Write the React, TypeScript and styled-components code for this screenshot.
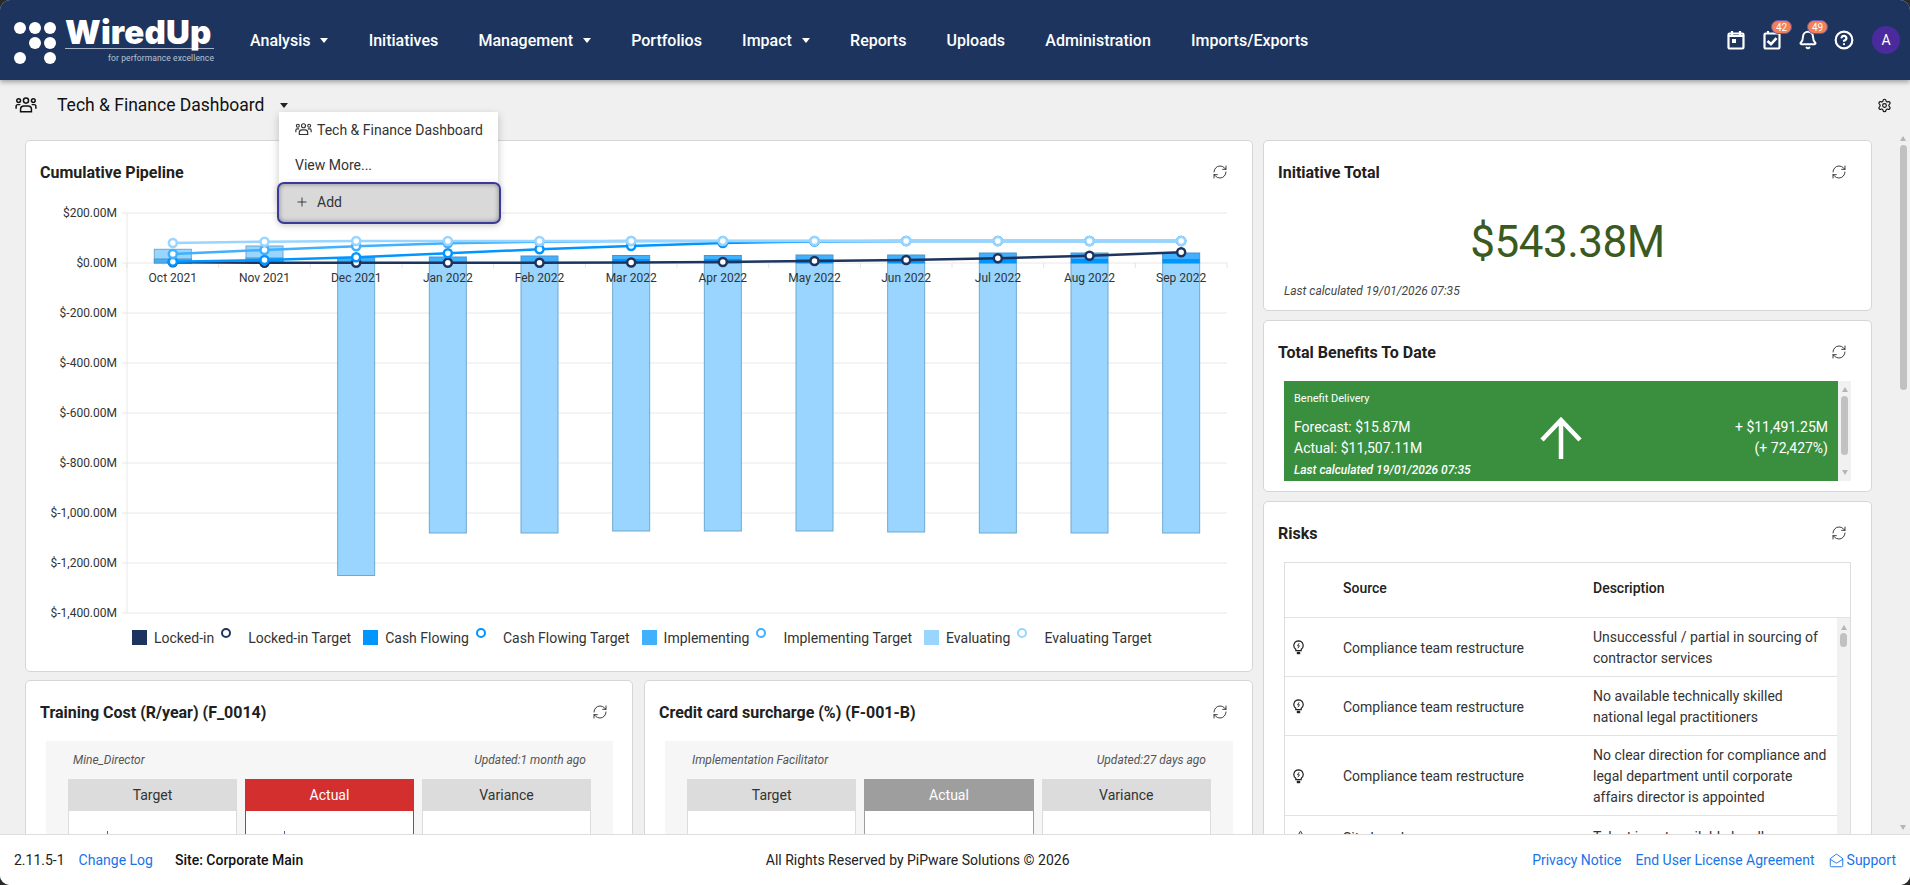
import React from "react";
import styled, { createGlobalStyle } from "styled-components";
import { RefreshCw, Settings, Bell, CircleHelp, Plus, Star, MailOpen } from "lucide-react";

const Global = createGlobalStyle`
  html, body { margin: 0; padding: 0; height: 100%; background: #2a2a2a; overflow: hidden; }
  #root { height: 100%; }
  * { box-sizing: border-box; }
`;

const Page = styled.div`
  height: 100vh;
  display: flex;
  flex-direction: column;
  background: #f0f0f0;
  border-radius: 10px;
  overflow: hidden;
  font-family: Roboto, "Liberation Sans", sans-serif;
  font-size: 14px;
  color: #333;
`;

const Header = styled.header`
  flex: 0 0 80px;
  display: flex;
  align-items: center;
  background: #1d355e;
  color: #fff;
  padding: 0 10px 0 14px;
  box-shadow: 0 2px 5px rgba(0, 0, 0, 0.35);
  position: relative;
  z-index: 3;
`;

const LogoWrap = styled.div`
  display: flex;
  align-items: flex-start;
  width: 236px;
  flex: none;
  gap: 7px;
`;

const LogoBlock = styled.div`
  width: 149px;
  padding-top: 2px;
`;

const LogoWord = styled.div`
  font-family: Inter, sans-serif;
  font-weight: 900;
  font-size: 33px;
  line-height: 31px;
  height: 32px;
  letter-spacing: 0.2px;
  border-bottom: 1px solid #aab4c8;
  white-space: nowrap;
`;

const LogoTag = styled.div`
  font-size: 8.5px;
  line-height: 11px;
  margin-top: 4px;
  letter-spacing: 0.1px;
  text-align: right;
  color: #b9c2d2;
  white-space: nowrap;
`;

const Nav = styled.nav`
  display: flex;
  align-items: center;
  gap: 40.2px;
`;

const NavItem = styled.div`
  display: flex;
  align-items: center;
  gap: 10px;
  font-size: 16px;
  font-weight: 500;
  white-space: nowrap;
`;

const Caret = styled.span<{ $color?: string; $size?: number }>`
  width: 0;
  height: 0;
  border-left: ${(p) => p.$size ?? 4}px solid transparent;
  border-right: ${(p) => p.$size ?? 4}px solid transparent;
  border-top: ${(p) => (p.$size ?? 4) + 1}px solid ${(p) => p.$color ?? "#fff"};
`;

const HeaderTools = styled.div`
  margin-left: auto;
  display: flex;
  align-items: center;
`;

const ToolIcon = styled.div`
  position: relative;
  width: 36px;
  height: 24px;
  display: flex;
  align-items: center;
  justify-content: center;
`;

const Badge = styled.span`
  position: absolute;
  top: -8px;
  left: 17px;
  height: 14px;
  min-width: 21px;
  border-radius: 7px;
  background: #f47f58;
  border: 0.5px solid #5d5aa8;
  font-size: 10px;
  line-height: 14px;
  text-align: center;
  color: #fff;
`;

const Avatar = styled.div`
  width: 28px;
  height: 28px;
  border-radius: 50%;
  background: #4a2a9c;
  margin-left: 10px;
  display: flex;
  align-items: center;
  justify-content: center;
  font-size: 14px;
`;

const SubBar = styled.div`
  flex: 0 0 50px;
  position: relative;
  z-index: 2;
  display: flex;
  align-items: center;
  padding: 0 18px 0 15px;
  color: #111;
`;

const SubTitle = styled.div`
  font-size: 17.5px;
  margin-left: 20px;
  margin-right: 16px;
  white-space: nowrap;
`;

const GearWrap = styled.div`
  margin-left: auto;
  display: flex;
  color: #111;
`;

const Menu = styled.div`
  position: absolute;
  top: 32px;
  left: 279px;
  width: 219px;
  height: 88px;
  padding-top: 0;
  background: #fff;
  box-shadow: 0 3px 8px rgba(0, 0, 0, 0.22);
`;

const MenuItem = styled.div`
  height: 35px;
  display: flex;
  align-items: center;
  gap: 5px;
  padding-left: 16px;
  color: #333;
  white-space: nowrap;
`;

const MenuAdd = styled.div`
  position: absolute;
  top: 70px;
  left: -2px;
  width: 224px;
  height: 42px;
  display: flex;
  align-items: center;
  gap: 8px;
  padding: 0 0 2px 16px;
  background: #d9d9d9;
  border: 2px solid #3a3a9a;
  border-radius: 7px;
  box-shadow: inset 0 0 5px rgba(0, 0, 0, 0.4), 0 2px 6px rgba(0, 0, 0, 0.2);
  color: #333;
`;

const Main = styled.main`
  flex: 1;
  min-height: 0;
  display: flex;
  align-items: flex-start;
  overflow: hidden;
  padding-left: 25px;
`;

const LeftCol = styled.div`
  flex: 0 0 1228px;
  margin-top: 10px;
  display: flex;
  flex-direction: column;
  gap: 8px;
`;

const RightCol = styled.div`
  flex: 0 0 609px;
  margin: 10px 0 0 10px;
  display: flex;
  flex-direction: column;
  gap: 9px;
`;

const Card = styled.section<{ $height?: number }>`
  background: #fff;
  border: 1px solid #d6d6d6;
  border-radius: 5px;
  ${(p) => (p.$height ? `height: ${p.$height}px;` : "")}
  display: flex;
  flex-direction: column;
  flex: none;
`;

const CardHead = styled.div`
  flex: 0 0 60px;
  display: flex;
  align-items: center;
  justify-content: space-between;
  padding: 2px 24px 0 14px;
`;

const CardTitle = styled.h2`
  margin: 0;
  font-size: 16px;
  font-weight: 700;
  color: #212121;
`;

const Refresh = styled(RefreshCw).attrs({ size: 16, strokeWidth: 1.3 })`
  color: #222;
`;

const ChartSvg = styled.svg`
  display: block;
  flex: none;
`;

const Legend = styled.div`
  display: flex;
  align-items: center;
  gap: 7px;
  margin-top: 10px;
  padding-left: 106px;
  height: 15px;
  color: #333;
  white-space: nowrap;
`;

const LegendEntry = styled.div<{ $gap: number; $after?: number }>`
  display: flex;
  align-items: center;
  gap: ${(p) => p.$gap}px;
  margin-right: ${(p) => p.$after ?? 0}px;
`;

const Swatch = styled.span<{ $color: string }>`
  width: 15px;
  height: 15px;
  background: ${(p) => p.$color};
`;

const Ring = styled.span<{ $color: string }>`
  width: 10px;
  height: 10px;
  border-radius: 50%;
  background: #fff;
  border: 2.5px solid ${(p) => p.$color};
  margin-bottom: 10px;
`;

const TwoUp = styled.div`
  display: grid;
  grid-template-columns: 608px 609px;
  gap: 11px;
`;

const Panel = styled.div`
  margin: 0 19px 0 20px;
  background: #f6f6f6;
  padding: 0 22px 24px;
`;

const PanelHead = styled.div`
  height: 38px;
  padding: 0 5px;
  display: flex;
  align-items: center;
  justify-content: space-between;
  font-size: 12px;
  font-style: italic;
  color: #555;
`;

const Tiles = styled.div`
  display: grid;
  grid-template-columns: repeat(3, 1fr);
  gap: 8px;
`;

const Tile = styled.div<{ $accent?: string }>`
  background: #fff;
  border: 1px solid ${(p) => p.$accent ?? "#dcdcdc"};
  height: 120px;
`;

const TileHead = styled.div<{ $accent?: string }>`
  height: 32px;
  margin: -1px;
  background: ${(p) => p.$accent ?? "#dcdcdc"};
  color: ${(p) => (p.$accent ? "#fff" : "#333")};
  display: flex;
  align-items: center;
  justify-content: center;
`;

const TileMark = styled.div`
  width: 1px;
  height: 4px;
  margin: 21px 0 0 38px;
  background: #7a4a8a;
`;

const BigValue = styled.div`
  font-size: 44px;
  line-height: 50px;
  text-align: center;
  color: #3a5a22;
  margin-top: 16px;
  letter-spacing: -0.5px;
`;

const CalcNote = styled.div`
  font-size: 12px;
  font-style: italic;
  color: #444;
  margin: 17px 0 0 20px;
`;

const BenefitRow = styled.div`
  display: flex;
  margin: 0 20px;
  height: 100px;
`;

const Benefit = styled.div`
  flex: 1;
  background: #3a8f3f;
  color: #fff;
  padding: 11px 10px 0;
  display: flex;
  flex-direction: column;
`;

const BenefitLabel = styled.div`
  font-size: 11px;
  line-height: 13px;
`;

const BenefitMiddle = styled.div`
  display: grid;
  grid-template-columns: 1fr auto 1fr;
  align-items: center;
  margin-top: 12px;
  line-height: 21px;
  height: 42px;
`;

const BenefitRight = styled.div`
  text-align: right;
`;

const BenefitNote = styled.div`
  font-size: 12px;
  font-style: italic;
  font-weight: 500;
  margin-top: 4px;
`;

const Track = styled.div<{ $width: number; $bg?: string }>`
  flex: 0 0 ${(p) => p.$width}px;
  align-self: stretch;
  background: ${(p) => p.$bg ?? "#f1f1f1"};
  display: flex;
  flex-direction: column;
  align-items: center;
`;

const ArrowUp = styled.span<{ $top: number }>`
  width: 0;
  height: 0;
  margin-top: ${(p) => p.$top}px;
  border-left: 3.5px solid transparent;
  border-right: 3.5px solid transparent;
  border-bottom: 5px solid #b5b5b5;
`;

const ArrowDown = styled.span<{ $bottom: number }>`
  width: 0;
  height: 0;
  margin-top: auto;
  margin-bottom: ${(p) => p.$bottom}px;
  border-left: 3.5px solid transparent;
  border-right: 3.5px solid transparent;
  border-top: 5px solid #b5b5b5;
`;

const Thumb = styled.span<{ $top: number; $height: number }>`
  width: 7px;
  margin-top: ${(p) => p.$top}px;
  height: ${(p) => p.$height}px;
  border-radius: 4px;
  background: #c1c1c1;
`;

const PageTrack = styled(Track)`
  margin-left: auto;
`;

const RisksTable = styled.div`
  margin: 0 20px;
  border: 1px solid #dedede;
  border-bottom: 0;
`;

const RiskRow = styled.div<{ $height: number; $head?: boolean }>`
  display: grid;
  grid-template-columns: 58px 250px 1fr;
  align-items: center;
  height: ${(p) => p.$height}px;
  padding: ${(p) => (p.$head ? "0 0 5px" : "1px 0 0")};
  border-bottom: 1px solid #e2e2e2;
`;

const HeadCell = styled.div`
  font-weight: 500;
  color: #212121;
`;

const RiskBody = styled.div`
  display: flex;
`;

const RiskRows = styled.div`
  flex: 1;
  min-width: 0;
`;

const IconCell = styled.div`
  display: flex;
  padding: 0 0 0 8px;
  color: #222;
`;

const Desc = styled.div`
  line-height: 21px;
  padding-right: 6px;
`;

const Footer = styled.footer`
  flex: 0 0 51px;
  position: relative;
  z-index: 3;
  background: #fff;
  border-top: 1px solid #dedede;
  display: flex;
  justify-content: space-between;
  align-items: center;
  padding: 0 14px;
  color: #222;
`;

const FootLeft = styled.div`
  display: flex;
  gap: 14px;
  white-space: nowrap;
`;

const FootRight = styled.div`
  display: flex;
  gap: 14px;
  white-space: nowrap;
`;

const Link = styled.a`
  display: inline-flex;
  align-items: center;
  gap: 3px;
  color: #1a73e8;
  text-decoration: none;
`;

const SiteName = styled.span`
  font-weight: 500;
  margin-left: 8px;
  color: #111;
`;

const Dots = () => (
  <svg width="44" height="50" viewBox="0 0 44 50" fill="#fff" style={{ flex: "none" }}>
    {[[6, 13], [21, 13], [36, 13], [21, 28], [36, 28], [6, 43], [36, 43]].map(([x, y]) => (
      <circle key={`${x}-${y}`} cx={x} cy={y} r="6" />
    ))}
  </svg>
);

const CalendarIcon = () => (
  <svg width="18" height="20" viewBox="0 0 18 20" fill="none" stroke="#fff" strokeWidth="2.200">
    <rect x="1.500" y="3.500" width="15" height="15" rx="1.200" />
    <path d="M1.500 6h15M5 1v4M13 1v4" />
    <rect x="5" y="9" width="4" height="4" fill="#fff" stroke="none" />
  </svg>
);

const CheckCalendarIcon = () => (
  <svg width="18" height="20" viewBox="0 0 18 20" fill="none" stroke="#fff" strokeWidth="2.200">
    <rect x="1.500" y="3.500" width="15" height="15" rx="1.200" />
    <path d="M5 1v3" />
    <path d="M4.500 11 8 14.200l5.500-6" strokeWidth="2.600" />
  </svg>
);

const PeopleIcon = ({ w = 22 }: { w?: number }) => (
  <svg width={w} height={w * 0.72} viewBox="0 0 22 16" fill="none" stroke="currentColor" strokeWidth="1.500">
    <circle cx="11" cy="3.600" r="2.600" />
    <circle cx="3.600" cy="3.600" r="1.900" />
    <circle cx="18.400" cy="3.600" r="1.900" />
    <path d="M5.500 15v-2.500c0-2.200 1.600-3.500 3.500-3.500h4c1.900 0 3.500 1.300 3.500 3.500V15zM1 12V9.500c0-1 .8-1.800 1.800-1.800h2.500M21 12V9.500c0-1-.8-1.800-1.800-1.800h-2.500" />
  </svg>
);

const BulbIcon = () => (
  <svg width="11" height="15" viewBox="0 0 11 15" fill="none" stroke="currentColor" strokeWidth="1.200">
    <path d="M5.500.8a4.700 4.700 0 0 0-2.700 8.500v1.300h5.400V9.300A4.700 4.700 0 0 0 5.500.8z" />
    <path d="M6.200 3.200 4.500 5.800h2L4.900 8.200" strokeWidth=".9" />
    <path d="M3.800 13h3.400" strokeWidth="2.400" />
  </svg>
);

const ticks = ["Oct 2021", "Nov 2021", "Dec 2021", "Jan 2022", "Feb 2022", "Mar 2022", "Apr 2022", "May 2022", "Jun 2022", "Jul 2022", "Aug 2022", "Sep 2022"];
const yLabels = ["$200.00M", "$0.00M", "$-200.00M", "$-400.00M", "$-600.00M", "$-800.00M", "$-1,000.00M", "$-1,200.00M", "$-1,400.00M"];
const stepX = 1100 / 12;
const cx = (i: number) => 127 + stepX * (i + 0.5);
const ZERO = 263;

// [top of implementing segment, top of cash segment, bottom of the negative bar]
const bars: number[][] = [
  [259, 263, 263], [258, 263, 263], [257.6, 263, 575.5], [257, 263, 533], [256, 263, 533], [255.5, 259, 531],
  [255.5, 259, 531], [255, 259, 531], [255, 259, 532], [253, 259, 533], [253, 259, 533], [253, 259, 533],
];
const lines: { color: string; ys: number[] }[] = [
  { color: "#1d355e", ys: [262.3, 262.7, 262.7, 262.7, 262.7, 262.5, 262, 261, 260, 258.3, 255.7, 252.3] },
  { color: "#0095ff", ys: [261.7, 260, 257.3, 253.3, 249.3, 246, 243, 241.5, 241, 241, 241, 241] },
  { color: "#40b0ff", ys: [254, 250, 246.3, 243.3, 241.7, 241, 241, 241, 241, 241, 241, 241] },
  { color: "#99d5ff", ys: [243, 241.7, 241, 241, 241, 241, 241, 241, 241, 241, 241, 241] },
];

const Chart = () => (
  <ChartSvg width="1226" height="419" viewBox="26 201 1226 419" fontFamily="Roboto, sans-serif" fontSize="12" fill="#333">
    {yLabels.map((t, i) => (
      <g key={t}>
        <line x1="122" x2="1227" y1={213 + i * 50} y2={213 + i * 50} stroke="#e8e8e8" />
        <text x="117" y={217 + i * 50} textAnchor="end">{t}</text>
      </g>
    ))}
    <line x1="127" x2="127" y1="213" y2="613" stroke="#e8e8e8" />
    {Array.from({ length: 13 }, (_, i) => (
      <line key={i} x1={127 + i * stepX} x2={127 + i * stepX} y1="263" y2="268" stroke="#e4e4e4" />
    ))}
    <rect x={cx(0) - 18.5} y="249.3" width="37" height="13.7" fill="#99d5ff" stroke="#6ea9d1" />
    <rect x={cx(1) - 18.5} y="246" width="37" height="17" fill="#99d5ff" stroke="#6ea9d1" />
    {bars.map(([impl, cash, bottom], i) => (
      <g key={i} stroke="#4a96cc">
        {bottom > ZERO && <rect x={cx(i) - 18.5} y={ZERO} width="37" height={bottom - ZERO} fill="#99d5ff" stroke="#6ea9d1" />}
        <rect x={cx(i) - 18.5} y={impl} width="37" height={ZERO - impl} fill="#40b0ff" />
        {cash < ZERO && <rect x={cx(i) - 18.5} y={cash} width="37" height={ZERO - cash} fill="#0095ff" stroke="none" />}
      </g>
    ))}
    {ticks.map((t, i) => (
      <text key={t} x={cx(i)} y="282" textAnchor="middle">{t}</text>
    ))}
    {lines.map((l) => (
      <g key={l.color}>
        <polyline points={l.ys.map((y, i) => `${cx(i)},${y}`).join(" ")} fill="none" stroke={l.color} strokeWidth="2.5" />
        {l.ys.map((y, i) => (
          <circle key={i} cx={cx(i)} cy={y} r="4" fill="#fff" stroke={l.color} strokeWidth="2.5" />
        ))}
      </g>
    ))}
  </ChartSvg>
);

const legend = [
  { name: "Locked-in", color: "#1d355e" },
  { name: "Cash Flowing", color: "#0095ff" },
  { name: "Implementing", color: "#40b0ff" },
  { name: "Evaluating", color: "#99d5ff" },
];

const risks = [
  { h: 59, src: "Compliance team restructure", lines: "Unsuccessful / partial in sourcing of contractor services" },
  { h: 59, src: "Compliance team restructure", lines: "No available technically skilled national legal practitioners" },
  { h: 80, src: "Compliance team restructure", lines: "No clear direction for compliance and legal department until corporate affairs director is appointed" },
];

const KpiCard = ({ title, owner, updated, accent, marks }: { title: string; owner: string; updated: string; accent: string; marks?: boolean }) => (
  <Card $height={260}>
    <CardHead>
      <CardTitle>{title}</CardTitle>
      <Refresh />
    </CardHead>
    <Panel>
      <PanelHead>
        <span>{owner}</span>
        <span>{updated}</span>
      </PanelHead>
      <Tiles>
        <Tile>
          <TileHead>Target</TileHead>
          {marks && <TileMark />}
        </Tile>
        <Tile $accent={accent}>
          <TileHead $accent={accent}>Actual</TileHead>
          {marks && <TileMark />}
        </Tile>
        <Tile>
          <TileHead>Variance</TileHead>
        </Tile>
      </Tiles>
    </Panel>
  </Card>
);

export default function App() {
  return (
    <Page>
      <Global />
      <Header>
        <LogoWrap>
          <Dots />
          <LogoBlock>
            <LogoWord>WiredUp</LogoWord>
            <LogoTag>for performance excellence</LogoTag>
          </LogoBlock>
        </LogoWrap>
        <Nav>
          <NavItem>Analysis<Caret /></NavItem>
          <NavItem>Initiatives</NavItem>
          <NavItem>Management<Caret /></NavItem>
          <NavItem>Portfolios</NavItem>
          <NavItem>Impact<Caret /></NavItem>
          <NavItem>Reports</NavItem>
          <NavItem>Uploads</NavItem>
          <NavItem>Administration</NavItem>
          <NavItem>Imports/Exports</NavItem>
        </Nav>
        <HeaderTools>
          <ToolIcon><CalendarIcon /></ToolIcon>
          <ToolIcon>
            <CheckCalendarIcon />
            <Badge>42</Badge>
          </ToolIcon>
          <ToolIcon>
            <Bell size={20} strokeWidth={2.4} />
            <Badge>49</Badge>
          </ToolIcon>
          <ToolIcon><CircleHelp size={20} strokeWidth={2.6} /></ToolIcon>
          <Avatar>A</Avatar>
        </HeaderTools>
      </Header>

      <SubBar>
        <PeopleIcon />
        <SubTitle>Tech &amp; Finance Dashboard</SubTitle>
        <Caret $color="#222" />
        <GearWrap><Settings size={15} strokeWidth={1.8} /></GearWrap>
        <Menu>
          <MenuItem><PeopleIcon w={17} />Tech &amp; Finance Dashboard</MenuItem>
          <MenuItem>View More...</MenuItem>
          <MenuAdd><Plus size={14} strokeWidth={1.6} />Add</MenuAdd>
        </Menu>
      </SubBar>

      <Main>
        <LeftCol>
          <Card $height={532}>
            <CardHead>
              <CardTitle>Cumulative Pipeline</CardTitle>
              <Refresh />
            </CardHead>
            <Chart />
            <Legend>
              {legend.map((l) => (
                <React.Fragment key={l.name}>
                  <LegendEntry $gap={7}>
                    <Swatch $color={l.color} />
                    {l.name}
                  </LegendEntry>
                  <LegendEntry $gap={17} $after={5}>
                    <Ring $color={l.color} />
                    {l.name} Target
                  </LegendEntry>
                </React.Fragment>
              ))}
            </Legend>
          </Card>
          <TwoUp>
            <KpiCard title="Training Cost (R/year) (F_0014)" owner="Mine_Director" updated="Updated:1 month ago" accent="#d32f2f" marks />
            <KpiCard title="Credit card surcharge (%) (F-001-B)" owner="Implementation Facilitator" updated="Updated:27 days ago" accent="#9e9e9e" />
          </TwoUp>
        </LeftCol>

        <RightCol>
          <Card $height={171}>
            <CardHead>
              <CardTitle>Initiative Total</CardTitle>
              <Refresh />
            </CardHead>
            <BigValue>$543.38M</BigValue>
            <CalcNote>Last calculated 19/01/2026 07:35</CalcNote>
          </Card>
          <Card $height={172}>
            <CardHead>
              <CardTitle>Total Benefits To Date</CardTitle>
              <Refresh />
            </CardHead>
            <BenefitRow>
              <Benefit>
                <BenefitLabel>Benefit Delivery</BenefitLabel>
                <BenefitMiddle>
                  <div>
                    <div>Forecast: $15.87M</div>
                    <div>Actual: $11,507.11M</div>
                  </div>
                  <svg width="42" height="42" viewBox="0 0 42 42" fill="none" stroke="#fff" strokeWidth="4.5">
                    <path d="M21 42V3M2 23 21 3l19 20" />
                  </svg>
                  <BenefitRight>
                    <div>+ $11,491.25M</div>
                    <div>(+ 72,427%)</div>
                  </BenefitRight>
                </BenefitMiddle>
                <BenefitNote>Last calculated 19/01/2026 07:35</BenefitNote>
              </Benefit>
              <Track $width={13}>
                <ArrowUp $top={6} />
                <Thumb $top={4} $height={59} />
                <ArrowDown $bottom={6} />
              </Track>
            </BenefitRow>
          </Card>
          <Card $height={420}>
            <CardHead>
              <CardTitle>Risks</CardTitle>
              <Refresh />
            </CardHead>
            <RisksTable>
              <RiskRow $height={55} $head>
                <span />
                <HeadCell>Source</HeadCell>
                <HeadCell>Description</HeadCell>
              </RiskRow>
              <RiskBody>
                <RiskRows>
                  {risks.map((r) => (
                    <RiskRow $height={r.h} key={r.lines}>
                      <IconCell><BulbIcon /></IconCell>
                      <div>{r.src}</div>
                      <Desc>{r.lines}</Desc>
                    </RiskRow>
                  ))}
                  <RiskRow $height={43}>
                    <IconCell><Star size={15} strokeWidth={1.5} /></IconCell>
                    <div>Site Legal</div>
                    <Desc>Talent is not available locally</Desc>
                  </RiskRow>
                </RiskRows>
                <Track $width={13}>
                  <ArrowUp $top={7} />
                  <Thumb $top={3} $height={14} />
                </Track>
              </RiskBody>
            </RisksTable>
          </Card>
        </RightCol>

        <PageTrack $width={14} $bg="#f0f0f0">
          <ArrowUp $top={6} />
          <Thumb $top={4} $height={245} />
          <ArrowDown $bottom={4} />
        </PageTrack>
      </Main>

      <Footer>
        <FootLeft>
          <span>2.11.5-1</span>
          <Link>Change Log</Link>
          <SiteName>Site: Corporate Main</SiteName>
        </FootLeft>
        <div>All Rights Reserved by PiPware Solutions © 2026</div>
        <FootRight>
          <Link>Privacy Notice</Link>
          <Link>End User License Agreement</Link>
          <Link><MailOpen size={15} strokeWidth={1.5} />Support</Link>
        </FootRight>
      </Footer>
    </Page>
  );
}
